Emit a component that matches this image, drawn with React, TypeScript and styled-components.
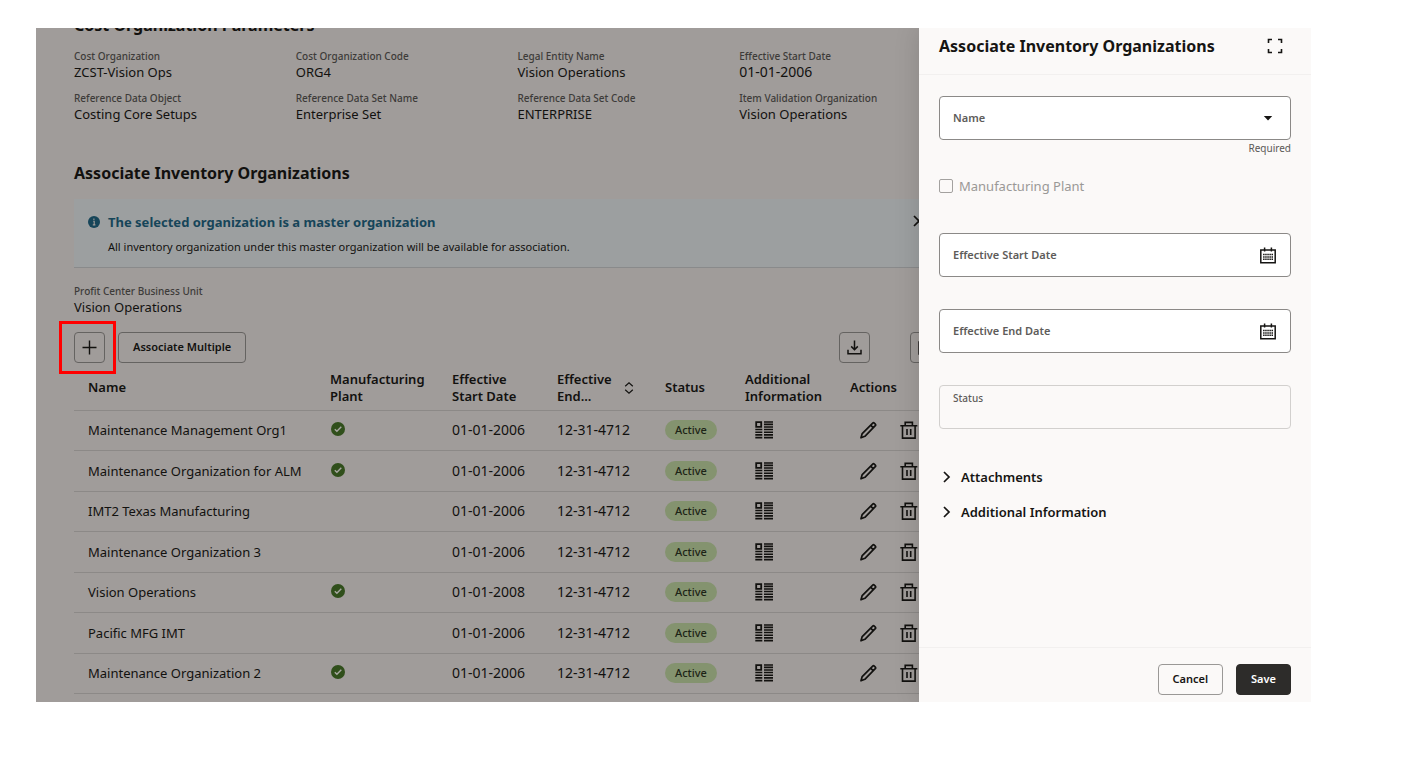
import React from 'react';
import styled, { createGlobalStyle } from 'styled-components';

const GlobalStyle = createGlobalStyle`
  *, *::before, *::after { box-sizing: border-box; }
  body {
    margin: 0;
    background: #fff;
    color: #161513;
    font-family: 'Noto Sans', 'Open Sans', sans-serif;
    font-size: 13px;
    line-height: 18px;
  }
  button, input, select { font: inherit; color: inherit; margin: 0; }
  h1, h2, h3, p, dl, dd { margin: 0; }
`;

const Page = styled.div`
  padding: 28px 99px 60px 36px;
`;

const Frame = styled.div`
  display: flex;
  overflow: hidden;
`;

const Main = styled.main`
  flex: 1;
  min-width: 0;
  overflow: hidden;
  padding: 0 0 8px 38px;
  background: #a09c9a;
  color: #12110f;
`;

/* The page runs on underneath the drawer. */
const Content = styled.div`
  width: calc(100% + 42px);
`;

const Heading = styled.h2`
  font-size: 16px;
  line-height: 24px;
  font-weight: 700;
`;

const ScrolledHeading = styled(Heading)`
  margin-top: -15px;
`;

const Parameters = styled.dl`
  display: grid;
  grid-template-columns: repeat(4, 1fr);
  row-gap: 11px;
  margin: 13px 0 38px;
`;

const Term = styled.dt`
  font-size: 10px;
  line-height: 13px;
  font-weight: 500;
  color: #3d3b39;
`;

const Value = styled.dd<{ $numeric?: boolean }>`
  font-size: ${p => (p.$numeric ? 14 : 13)}px;
`;

const Banner = styled.section`
  display: flex;
  gap: 8px;
  margin-top: 14px;
  padding: 13px 34px 12px 14px;
  background: #9c9fa0;
  border-bottom: 1px solid #898a8b;
`;

const BannerIcon = styled.svg`
  flex: none;
  width: 12px;
  height: 12px;
  margin-top: 4px;
`;

const BannerText = styled.div`
  flex: 1;
  display: grid;
  gap: 6px;
`;

const BannerTitle = styled.h3`
  font-size: 13px;
  line-height: 20px;
  font-weight: 700;
  color: #164559;
`;

const BannerBody = styled.p`
  font-size: 11px;
  line-height: 17px;
`;

const PlainButton = styled.button`
  display: flex;
  align-items: center;
  justify-content: center;
  padding: 0;
  border: 0;
  background: none;
  color: inherit;
`;

const BannerClose = styled(PlainButton)`
  align-self: flex-start;
  height: 18px;
  width: 16px;
`;

const BusinessUnit = styled.dl`
  margin: 17px 0 16px;
`;

const Toolbar = styled.div`
  display: flex;
  align-items: center;
  gap: 13px;
  padding-right: 20px;
`;

const Highlighted = styled.div`
  position: relative;
  display: flex;
  &::after {
    content: '';
    position: absolute;
    inset: -11px -11px -11px -15px;
    border: 3px solid #ff0000;
    pointer-events: none;
  }
`;

const ToolbarEnd = styled.div`
  display: flex;
  gap: 40px;
  margin-left: auto;
`;

const Button = styled.button<{ $tone?: 'light' | 'dark' }>`
  display: inline-flex;
  align-items: center;
  justify-content: center;
  height: 31px;
  padding: 0 14px 1px;
  border: 1px solid ${p => (p.$tone === 'dark' ? '#2d2c2a' : p.$tone === 'light' ? '#9a9896' : '#656361')};
  border-radius: 4px;
  background: ${p => (p.$tone === 'dark' ? '#2d2c2a' : 'transparent')};
  color: ${p => (p.$tone === 'dark' ? '#fff' : 'inherit')};
  font-size: 11px;
  font-weight: 600;
`;

const IconButton = styled(Button)`
  width: 31px;
  padding: 0;
`;

const Table = styled.table`
  width: 100%;
  margin-top: 2px;
  table-layout: fixed;
  border-collapse: separate;
  border-spacing: 0;
`;

const Col = styled.col<{ $width: number }>`
  width: ${p => p.$width}px;
`;

const HeadCell = styled.th`
  height: 46px;
  padding: 0 0 0 14px;
  border-bottom: 1px solid #8c8987;
  font-weight: 600;
  line-height: 17px;
  text-align: left;
`;

const SortHead = styled.span`
  display: flex;
  align-items: center;
  gap: 12px;
`;

const Row = styled.tr`
  height: 40px;
  &:nth-child(even) { height: 41px; }
`;

const Cell = styled.td`
  padding: 0 0 1px 14px;
  border-bottom: 1px solid #8c8987;
  white-space: nowrap;
  svg { display: block; }
`;

const DateCell = styled(Cell)`
  font-size: 14px;
`;

const PlantCell = styled(Cell)`
  padding-bottom: 3px;
`;

const InfoCell = styled(Cell)`
  padding-left: 24px;
`;

const Actions = styled.div`
  display: flex;
  gap: 23px;
  padding-left: 10px;
`;

const Pill = styled.span`
  display: inline-block;
  padding: 0 10px;
  border-radius: 10px;
  background: #84936f;
  color: #1d2416;
  font-size: 11px;
  line-height: 20px;
  font-weight: 500;
  vertical-align: middle;
`;

const Drawer = styled.aside`
  display: flex;
  flex-direction: column;
  flex: none;
  width: 392px;
  background: #fbf9f8;
  box-shadow: 0 0 24px rgba(0, 0, 0, 0.14);
`;

const DrawerHeader = styled.header`
  display: flex;
  align-items: center;
  justify-content: space-between;
  padding: 6px 28px 16px 20px;
  border-bottom: 1px solid #f2f0ef;
`;

const DrawerBody = styled.form`
  flex: 1;
  padding: 21px 20px;
`;

const DrawerFooter = styled.footer`
  display: flex;
  justify-content: flex-end;
  gap: 13px;
  padding: 16px 20px 7px;
  border-top: 1px solid #f2f0ef;
`;

const Field = styled.div`
  display: grid;
  grid-template-areas: 'control';
  align-items: center;
  height: 44px;
  & > * { grid-area: control; }
`;

const control = `
  width: 100%;
  height: 44px;
  padding: 0 14px;
  border-radius: 4px;
  appearance: none;
  outline: none;
`;

const TextInput = styled.input`
  ${control}
  border: 1px solid ${p => (p.readOnly ? '#d2d0ce' : '#8b8987')};
  background: ${p => (p.readOnly ? 'transparent' : '#fff')};
`;

const Select = styled.select`
  ${control}
  border: 1px solid #8b8987;
  background: #fff;
`;

const FieldLabel = styled.label<{ $raised?: boolean }>`
  z-index: 1;
  align-self: ${p => (p.$raised ? 'start' : 'center')};
  justify-self: start;
  padding-left: 14px;
  padding-top: ${p => (p.$raised ? 4 : 0)}px;
  font-size: ${p => (p.$raised ? 10 : 11)}px;
  font-weight: ${p => (p.$raised ? 500 : 600)};
  color: #5e5c5a;
`;

const FieldIcon = styled.svg`
  z-index: 1;
  justify-self: end;
  margin-right: 15px;
  pointer-events: none;
`;

const Hint = styled.p`
  margin-top: 1px;
  font-size: 10px;
  line-height: 14px;
  text-align: right;
  color: #5a5856;
`;

const CheckRow = styled.label`
  display: flex;
  align-items: center;
  gap: 6px;
  margin: 22px 0 38px;
  color: #9a9896;
`;

const Checkbox = styled.input`
  appearance: none;
  width: 14px;
  height: 14px;
  border: 1px solid #a3a19f;
  border-radius: 2px;
`;

const Fields = styled.div`
  display: grid;
  gap: 32px;
`;

const Sections = styled.div`
  display: grid;
  justify-items: start;
  gap: 17px;
  margin-top: 39px;
`;

const Expander = styled(PlainButton)`
  gap: 10px;
  padding-left: 3px;
  font-weight: 600;
`;

const Plus = () => (
  <svg width="15" height="15" viewBox="0 0 15 15" stroke="currentColor" strokeWidth="1.4" aria-hidden="true">
    <path d="M7.5 .5v14M.5 7.5h14" />
  </svg>
);

const Download = () => (
  <svg width="15" height="15" viewBox="0 0 15 15" fill="none" stroke="currentColor" strokeWidth="1.5" aria-hidden="true">
    <path d="M7.5 .5v9M4.2 6.4l3.3 3.3 3.3-3.3M1 9.8v4h13v-4" />
  </svg>
);

const Columns = () => (
  <svg width="16" height="16" viewBox="0 0 16 16" fill="none" stroke="currentColor" strokeWidth="1.4" aria-hidden="true">
    <path d="M1 2h14v12H1zM8 2v12" />
  </svg>
);

const Sort = () => (
  <svg width="10" height="12" viewBox="0 0 10 12" fill="none" stroke="currentColor" strokeWidth="1.2" aria-hidden="true">
    <path d="M1.2 4.2L5 .9l3.8 3.3M1.2 7.8L5 11.1l3.8-3.3" />
  </svg>
);

const CheckBadge = () => (
  <svg width="16" height="14" viewBox="0 0 16 14" role="img" aria-label="Yes">
    <circle cx="8" cy="7" r="7" fill="#304f1b" />
    <path d="M4.8 7.2l2.1 2.1 4.4-4.6" fill="none" stroke="#a8a8a2" strokeWidth="1.4" />
  </svg>
);

const Details = () => (
  <svg width="18" height="18" viewBox="0 0 18 18" fill="none" stroke="currentColor" aria-hidden="true">
    <path d="M1.2 1.2h5v4.6h-5z" strokeWidth="1.8" />
    <path d="M.3 8.5h7M.3 11.2h7M.3 13.9h7M.3 16.6h7M9 1h9M9 3.4h9M9 6h9M9 8.5h9M9 11.2h9M9 13.9h9M9 16.6h9" strokeWidth="1.6" />
  </svg>
);

const Pencil = () => (
  <svg width="17" height="18" viewBox="0 0 17 18" fill="none" stroke="currentColor" strokeWidth="1.7" strokeLinejoin="round" aria-hidden="true">
    <path d="M1 16.8l1.2-4.2L12.7 2.1q.8-.8 1.6 0l1 1q.8.8 0 1.6L4.9 15.3zM10.7 4.2l2.6 2.6" />
  </svg>
);

const Trash = () => (
  <svg width="18" height="18" viewBox="0 0 18 18" fill="none" stroke="currentColor" strokeWidth="1.6" aria-hidden="true">
    <path d="M.3 4.8h17M5.2 4.6V1.4h7.2v3.2M2.5 4.8v12.3h12.6V4.8M7 8v6M10.7 8v6" />
  </svg>
);

const Expand = () => (
  <svg width="16" height="16" viewBox="0 0 16 16" fill="none" stroke="currentColor" strokeWidth="1.6" aria-hidden="true">
    <path d="M1.5 5V1.5H5M11 1.5h3.5V5M14.5 11v3.5H11M5 14.5H1.5V11" />
  </svg>
);

const Calendar = () => (
  <FieldIcon width="16" height="17" viewBox="0 0 16 17" fill="none" stroke="#161513" aria-hidden="true">
    <path d="M.8 3h14.4v12.8H.8z" strokeWidth="1.5" />
    <path d="M4.6 .6v4M11.4 .6v4" strokeWidth="1.5" />
    <path d="M3.1 7.6h10M3.1 9.9h10M3.1 12.2h10" strokeWidth="1.5" strokeDasharray="1.5 .6" />
  </FieldIcon>
);

const Chevron = () => (
  <svg width="9" height="12" viewBox="0 0 9 12" fill="none" stroke="currentColor" strokeWidth="1.7" aria-hidden="true">
    <path d="M2 1l5 5-5 5" />
  </svg>
);

const parameters = [
  { term: 'Cost Organization', value: 'ZCST-Vision Ops' },
  { term: 'Cost Organization Code', value: 'ORG4' },
  { term: 'Legal Entity Name', value: 'Vision Operations' },
  { term: 'Effective Start Date', value: '01-01-2006', numeric: true },
  { term: 'Reference Data Object', value: 'Costing Core Setups' },
  { term: 'Reference Data Set Name', value: 'Enterprise Set' },
  { term: 'Reference Data Set Code', value: 'ENTERPRISE' },
  { term: 'Item Validation Organization', value: 'Vision Operations' },
];

const organizations = [
  { name: 'Maintenance Management Org1', plant: true, start: '01-01-2006' },
  { name: 'Maintenance Organization for ALM', plant: true, start: '01-01-2006' },
  { name: 'IMT2 Texas Manufacturing', plant: false, start: '01-01-2006' },
  { name: 'Maintenance Organization 3', plant: false, start: '01-01-2006' },
  { name: 'Vision Operations', plant: true, start: '01-01-2008' },
  { name: 'Pacific MFG IMT', plant: false, start: '01-01-2006' },
  { name: 'Maintenance Organization 2', plant: true, start: '01-01-2006' },
];

const OrganizationTable = () => (
  <Table>
    <colgroup>
      <col />
      <Col $width={122} />
      <Col $width={105} />
      <Col $width={108} />
      <Col $width={80} />
      <Col $width={105} />
      <Col $width={125} />
    </colgroup>
    <thead>
      <tr>
        <HeadCell>Name</HeadCell>
        <HeadCell>Manufacturing<br />Plant</HeadCell>
        <HeadCell>Effective<br />Start Date</HeadCell>
        <HeadCell><SortHead><span>Effective<br />End...</span><Sort /></SortHead></HeadCell>
        <HeadCell>Status</HeadCell>
        <HeadCell>Additional<br />Information</HeadCell>
        <HeadCell>Actions</HeadCell>
      </tr>
    </thead>
    <tbody>
      {organizations.map(o => (
        <Row key={o.name}>
          <Cell>{o.name}</Cell>
          <PlantCell>{o.plant && <CheckBadge />}</PlantCell>
          <DateCell>{o.start}</DateCell>
          <DateCell>12-31-4712</DateCell>
          <Cell><Pill>Active</Pill></Cell>
          <InfoCell><PlainButton aria-label="Additional information"><Details /></PlainButton></InfoCell>
          <Cell>
            <Actions>
              <PlainButton aria-label="Edit"><Pencil /></PlainButton>
              <PlainButton aria-label="Delete"><Trash /></PlainButton>
            </Actions>
          </Cell>
        </Row>
      ))}
    </tbody>
  </Table>
);

const AssociateDrawer = () => (
  <Drawer>
    <DrawerHeader>
      <Heading>Associate Inventory Organizations</Heading>
      <PlainButton aria-label="Expand"><Expand /></PlainButton>
    </DrawerHeader>
    <DrawerBody>
      <Field>
        <Select id="name" required defaultValue=""><option value="" /></Select>
        <FieldLabel htmlFor="name">Name</FieldLabel>
        <FieldIcon width="16" height="5" viewBox="0 0 16 5" aria-hidden="true">
          <path d="M3.8 0h8.4L8 4.6z" fill="#161513" />
        </FieldIcon>
      </Field>
      <Hint>Required</Hint>
      <CheckRow><Checkbox type="checkbox" disabled />Manufacturing Plant</CheckRow>
      <Fields>
        <Field>
          <TextInput id="start" />
          <FieldLabel htmlFor="start">Effective Start Date</FieldLabel>
          <Calendar />
        </Field>
        <Field>
          <TextInput id="end" />
          <FieldLabel htmlFor="end">Effective End Date</FieldLabel>
          <Calendar />
        </Field>
        <Field>
          <TextInput id="status" readOnly />
          <FieldLabel htmlFor="status" $raised>Status</FieldLabel>
        </Field>
      </Fields>
      <Sections>
        <Expander type="button"><Chevron />Attachments</Expander>
        <Expander type="button"><Chevron />Additional Information</Expander>
      </Sections>
    </DrawerBody>
    <DrawerFooter>
      <Button $tone="light">Cancel</Button>
      <Button $tone="dark">Save</Button>
    </DrawerFooter>
  </Drawer>
);

export default function App() {
  return (
    <Page>
      <GlobalStyle />
      <Frame>
        <Main>
          <Content>
            <ScrolledHeading>Cost Organization Parameters</ScrolledHeading>
            <Parameters>
              {parameters.map(p => (
                <div key={p.term}>
                  <Term>{p.term}</Term>
                  <Value $numeric={p.numeric}>{p.value}</Value>
                </div>
              ))}
            </Parameters>
            <Heading>Associate Inventory Organizations</Heading>
            <Banner>
              <BannerIcon viewBox="0 0 12 12" aria-hidden="true">
                <circle cx="6" cy="6" r="6" fill="#164559" />
                <path d="M5.2 5.2h1v3.6M4.8 8.9h2.6M5.9 2.6v1.3" stroke="#a09c9a" strokeWidth="1.1" fill="none" />
              </BannerIcon>
              <BannerText>
                <BannerTitle>The selected organization is a master organization</BannerTitle>
                <BannerBody>All inventory organization under this master organization will be available for association.</BannerBody>
              </BannerText>
              <BannerClose aria-label="Close">
                <svg width="12" height="12" viewBox="0 0 12 12" stroke="currentColor" strokeWidth="1.7" aria-hidden="true">
                  <path d="M1 1l10 10M11 1L1 11" />
                </svg>
              </BannerClose>
            </Banner>
            <BusinessUnit>
              <Term>Profit Center Business Unit</Term>
              <Value>Vision Operations</Value>
            </BusinessUnit>
            <Toolbar>
              <Highlighted>
                <IconButton aria-label="Add"><Plus /></IconButton>
              </Highlighted>
              <Button>Associate Multiple</Button>
              <ToolbarEnd>
                <IconButton aria-label="Download"><Download /></IconButton>
                <IconButton aria-label="Manage columns"><Columns /></IconButton>
              </ToolbarEnd>
            </Toolbar>
            <OrganizationTable />
          </Content>
        </Main>
        <AssociateDrawer />
      </Frame>
    </Page>
  );
}
